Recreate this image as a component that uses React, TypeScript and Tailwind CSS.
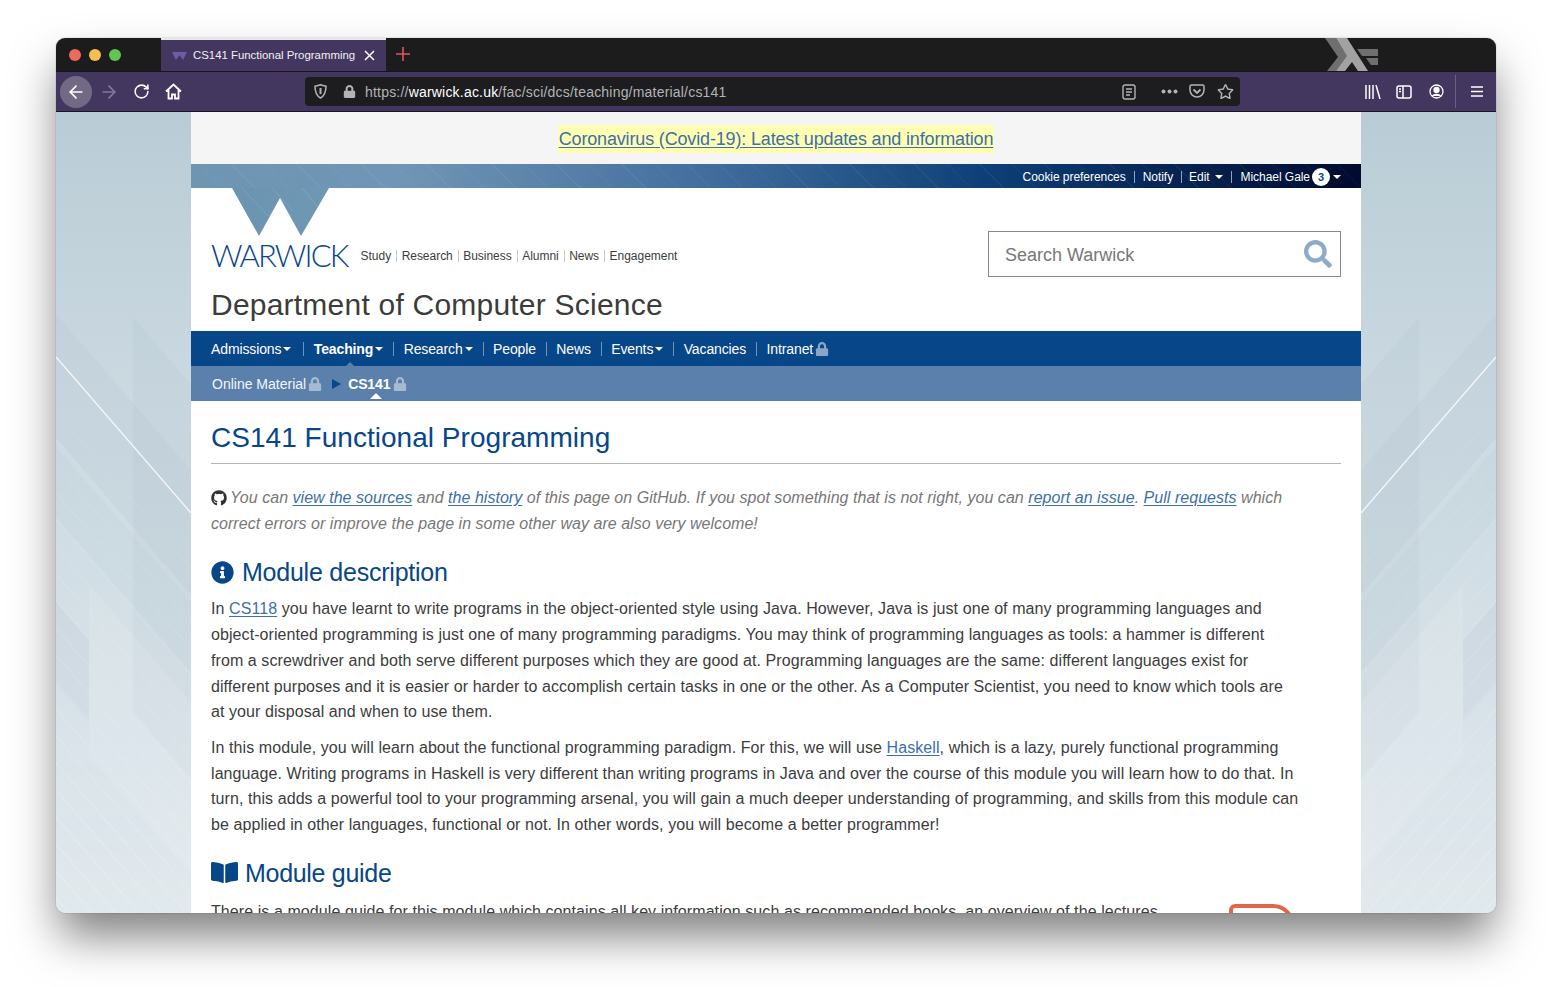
import { ArrowLeft, ArrowRight, RotateCw } from "lucide-react";
import type { ReactNode } from "react";
import {
  FaBookOpen,
  FaGithub,
  FaInfoCircle,
  FaLock,
  FaRegStar,
  FaSearch,
} from "react-icons/fa";

const navItems = [
  { label: "Admissions", caret: true },
  { label: "Teaching", caret: true, active: true },
  { label: "Research", caret: true },
  { label: "People" },
  { label: "News" },
  { label: "Events", caret: true },
  { label: "Vacancies" },
  { label: "Intranet", lock: true },
];

const topLinks = ["Study", "Research", "Business", "Alumni", "News", "Engagement"];

const stripes = Array.from({ length: 22 }, (_, i) => 300 + i * 27);

function Caret({ className = "" }: { className?: string }) {
  return (
    <span
      className={`inline-block h-0 w-0 border-x-4 border-t-4 border-x-transparent border-t-white ${className}`}
    />
  );
}

function TrafficLights() {
  return (
    <div className="flex w-[105px] items-center gap-2 pl-[13px]">
      <span className="h-3 w-3 rounded-full bg-[#ed6a5e]" />
      <span className="h-3 w-3 rounded-full bg-[#f5bf4f]" />
      <span className="h-3 w-3 rounded-full bg-[#61c554]" />
    </div>
  );
}

function HaskellLogo() {
  return (
    <svg className="absolute right-[117px] top-0" width="56" height="33" viewBox="0 0 56 33">
      <polygon points="2,0 13,0 25,19 13,33 4,33 15,19" fill="#6f6f6f" />
      <polygon points="13,0 24,0 45,33 35,33 29,24 22,33 13,33 24,18" fill="#a2a2a2" />
      <polygon points="34,11 55,11 55,18 39,18" fill="#6f6f6f" />
      <polygon points="43,20 55,20 55,27 48,27" fill="#6f6f6f" />
    </svg>
  );
}

function TabStrip() {
  return (
    <div className="relative flex h-[33px] shrink-0 bg-[#1c1c1c]">
      <TrafficLights />
      <div className="flex w-[225px] items-center border-t-2 border-t-[#e8e8e8] bg-[#44375f] pl-[11px] pr-[11px]">
        <svg width="15" height="8" viewBox="0 0 15 8">
          <polygon points="0,0 15,0 11,8 7.5,3 4,8" fill="#6f5aa5" />
        </svg>
        <span className="ml-[6px] flex-1 font-['Liberation_Sans',sans-serif] text-[11.4px] text-[#f2f0f5]">
          CS141 Functional Programming
        </span>
        <svg width="11" height="11" viewBox="0 0 11 11" stroke="#fff" strokeWidth="1.5">
          <path d="M1 1l9 9M10 1l-9 9" />
        </svg>
      </div>
      <svg className="ml-[10px] mt-[9px]" width="14" height="14" viewBox="0 0 14 14" stroke="#e2555c" strokeWidth="1.6">
        <path d="M7 0v14M0 7h14" />
      </svg>
      <HaskellLogo />
    </div>
  );
}

function UrlBar() {
  return (
    <div className="ml-[123px] flex h-[29px] w-[935px] items-center rounded-[4px] bg-[#1d1d1f] text-[#b4b4b4]">
      <svg className="ml-[9px]" width="13" height="15" viewBox="0 0 13 15" fill="none" stroke="#b4b4b4" strokeWidth="1.5">
        <path d="M1 2.2C3 1.8 5 1.3 6.5.8 8 1.3 10 1.8 12 2.2c0 6-1.5 9.5-5.5 11.8C2.5 11.700 1 8.200 1 2.200z" />
        <path d="M6.500 4v6" strokeWidth="2" />
      </svg>
      <FaLock className="ml-[16px] text-[13px]" />
      <span className="ml-[9px] pt-[2px] font-['Liberation_Sans',sans-serif] text-[14px] tracking-[0.2px]">
        https://<span className="text-white">warwick.ac.uk</span>/fac/sci/dcs/teaching/material/cs141
      </span>
      <div className="ml-auto flex items-center">
        <svg width="14" height="16" viewBox="0 0 14 16" fill="none" stroke="#b4b4b4" strokeWidth="1.400">
          <rect x="1" y="1" width="12" height="14" rx="2" />
          <path d="M4 5h6M4 8h6M4 11h4" />
        </svg>
        <svg className="ml-[25px]" width="17" height="5" viewBox="0 0 17 5" fill="#b4b4b4">
          <circle cx="2.500" cy="2.500" r="2" />
          <circle cx="8.500" cy="2.500" r="2" />
          <circle cx="14.500" cy="2.500" r="2" />
        </svg>
        <svg className="ml-[11px]" width="16" height="15" viewBox="0 0 16 15" fill="none" stroke="#b4b4b4" strokeWidth="1.500">
          <path d="M2.500 1h11A1.500 1.500 0 0 1 15 2.500V6a7 7 0 0 1-14 0V2.500A1.500 1.500 0 0 1 2.500 1z" />
          <path d="M4.500 5.500L8 9l3.500-3.500" strokeWidth="1.800" />
        </svg>
        <FaRegStar className="ml-[12px] mr-[6px] text-[17px]" />
      </div>
    </div>
  );
}

function Toolbar() {
  return (
    <div className="flex h-[41px] shrink-0 items-center border-y border-y-[#17151f] bg-[#44375f] text-white">
      <div className="ml-[4px] flex h-8 w-8 items-center justify-center rounded-full bg-[#726a85]">
        <ArrowLeft size={20} strokeWidth={2} />
      </div>
      <ArrowRight className="ml-[7px] text-[#837a95]" size={20} strokeWidth={2} />
      <RotateCw className="ml-[14px]" size={17} strokeWidth={2.2} />
      <svg className="ml-[15px]" width="17" height="17" viewBox="0 0 17 17" fill="none" stroke="#fff" strokeWidth="1.800">
        <path d="M1 8.500L8.500 1.500 16 8.500M3.500 7v8.500h3.500v-4h3v4h3.500V7" />
      </svg>
      <UrlBar />
      <svg className="ml-[125px]" width="16" height="14" viewBox="0 0 16 14" fill="none" stroke="#fff" strokeWidth="1.500">
        <path d="M1 0v14M4.500 0v14M8 0v14M11 0l4 14" />
      </svg>
      <svg className="ml-[15px]" width="16" height="14" viewBox="0 0 16 14" fill="none" stroke="#fff" strokeWidth="1.500">
        <rect x="1" y="1" width="14" height="12" rx="2" />
        <path d="M7 1v12M3 4h2M3 6.500h2" />
      </svg>
      <svg className="ml-[17px]" width="15" height="15" viewBox="0 0 15 15" fill="none" stroke="#fff" strokeWidth="1.300">
        <circle cx="7.500" cy="7.500" r="6.500" />
        <circle cx="7.500" cy="6" r="2.500" fill="#fff" />
        <path d="M3.500 12c1-2 7-2 8 0" fill="#fff" />
      </svg>
      <span className="ml-[11px] h-[33px] w-px bg-[#6a5f85]" />
      <svg className="ml-[15px]" width="12" height="11" viewBox="0 0 12 11" stroke="#fff" strokeWidth="1.700">
        <path d="M0 1h12M0 5.500h12M0 10h12" />
      </svg>
    </div>
  );
}

// one decorative side panel of the warwick background; the right one is the mirror
function SideArt({ flip = false }: { flip?: boolean }) {
  const id = flip ? "sideR" : "sideL";
  return (
    <svg className="shrink-0" width="135" height="801" viewBox="0 0 135 801">
      <defs>
        <linearGradient id={id} x1="0" y1="0" x2="0" y2="1">
          <stop offset="0" stopColor="#b9ccd5" />
          <stop offset="0.35" stopColor="#cbd9e1" />
          <stop offset="0.7" stopColor="#d6e1e7" />
          <stop offset="1" stopColor="#e1e9ee" />
        </linearGradient>
      </defs>
      <g transform={flip ? "translate(135 0) scale(-1 1)" : undefined}>
        <rect width="135" height="801" fill={`url(#${id})`} />
        <polygon points="0,202 135,358 135,484 0,326" fill="#6f8fa3" opacity="0.06" />
        <polygon points="77,205 135,272 135,667 77,600" fill="#6f8fa3" opacity="0.05" />
        <polygon points="0,335 135,490 135,560 0,405" fill="#6f8fa3" opacity="0.04" />
        <polygon points="33,474 135,592 135,762 33,644" fill="#ffffff" opacity="0.1" />
        <polygon points="0,490 33,528 33,610 0,572" fill="#6f8fa3" opacity="0.06" />
        <line x1="0" y1="245" x2="135" y2="401" stroke="#ffffff" strokeWidth="1.300" opacity="0.85" />
        {stripes.map((y, i) => (
          <line
            key={y}
            x1="0"
            y1={y}
            x2="135"
            y2={y + 156}
            stroke="#ffffff"
            strokeWidth="0.800"
            opacity={0.12 + i * 0.015}
          />
        ))}
      </g>
    </svg>
  );
}

function UtilityBar() {
  const links = ["Cookie preferences", "Notify"];
  return (
    <div className="flex h-6 shrink-0 items-center justify-end bg-[repeating-linear-gradient(45deg,transparent_0,transparent_22px,rgba(255,255,255,0.05)_22px,rgba(255,255,255,0.05)_23px),linear-gradient(90deg,#6e96b1_0%,#7095b6_18%,#44709f_43%,#0d3f77_68%,#000a2e_100%)] pt-px pr-5 text-[12px] tracking-[-0.05px] text-white">
      {links.map((link) => (
        <span key={link} className="border-r border-r-[#8fa5bd] pr-2 pl-2 leading-[12px]">
          {link}
        </span>
      ))}
      <span className="flex items-center border-r border-r-[#8fa5bd] pr-2 pl-[7px] leading-[12px]">
        Edit
        <Caret className="ml-[5px]" />
      </span>
      <span className="flex items-center pl-[9px] leading-[12px]">
        Michael Gale
        <span className="ml-[2px] flex h-[18px] w-[18px] items-center justify-center rounded-full bg-white text-[11px] font-bold text-[#074688]">
          3
        </span>
        <Caret className="ml-[3px]" />
      </span>
    </div>
  );
}

function Masthead() {
  return (
    <div className="flex h-[143px] shrink-0 justify-between bg-white px-5">
      <div>
        <svg className="ml-[21px] block" width="97" height="48" viewBox="0 0 97 48">
          <defs>
            <linearGradient id="wFill" x1="0" y1="0" x2="1" y2="0">
              <stop offset="0" stopColor="#6b94b0" />
              <stop offset="1" stopColor="#6f98b4" />
            </linearGradient>
          </defs>
          <polygon points="0,0 97,0 69,48 48,10 27,48" fill="url(#wFill)" />
          <path d="M10 0l32 34M40 0l22 24M70 0l15 18" stroke="#ffffff" strokeOpacity="0.12" />
        </svg>
        <div className="mt-[5px] flex items-center">
          <span className="font-['Lato',sans-serif] text-[31px] leading-[28px] font-light tracking-[-0.06em] text-[#074688]">
            WARWICK
          </span>
          <div className="ml-[13px] flex items-center pt-[2px] text-[12px] tracking-[-0.03px] text-[#3c3c3c]">
            {topLinks.map((link, i) => (
              <span
                key={link}
                className={`leading-[12px] ${i > 0 ? "ml-[5px] border-l border-l-[#c8c8c8] pl-[4.5px]" : ""}`}
              >
                {link}
              </span>
            ))}
          </div>
        </div>
        <div className="mt-[18px] text-[30px] leading-[36px] tracking-[0.22px] text-[#3c3c3c]">
          Department of Computer Science
        </div>
      </div>
      <div className="mt-[43px] flex h-[46px] w-[353px] items-center justify-between border border-[#8a8a8a] pr-2 pl-4 text-[18px] text-[#777777]">
        <span className="pt-[2px]">Search Warwick</span>
        <FaSearch className="text-[28px] text-[#8fa9c9]" />
      </div>
    </div>
  );
}

function MainNav() {
  return (
    <div className="flex h-[35px] shrink-0 items-center bg-[#074688] pl-5 text-[14px] tracking-[-0.12px] text-white">
      {navItems.map((item, i) => (
        <span
          key={item.label}
          className={`relative flex items-center leading-[14px] ${i === 1 ? "ml-3" : i > 1 ? "ml-[10px]" : ""} ${i > 0 ? "border-l border-l-[#6f94bd] pl-[9.4px]" : ""} ${item.active ? "font-bold" : ""}`}
        >
          {item.label}
          {item.caret ? <Caret className="ml-[2px]" /> : null}
          {item.lock ? <FaLock className="ml-[2px] text-[14px] text-[#8ba5c6]" /> : null}
          {item.active ? (
            <span className="absolute left-[40px] top-[20px] h-0 w-0 border-x-[6px] border-b-[6px] border-x-transparent border-b-[#5b80ab]" />
          ) : null}
        </span>
      ))}
    </div>
  );
}

function SubNav() {
  return (
    <div className="flex h-[35px] shrink-0 items-center bg-[#5b80ab] pl-[21px] text-[14px] text-white">
      <span className="pt-px text-[#f2f5f9]">Online Material</span>
      <FaLock className="ml-[2px] text-[14px] text-[#a6bad3]" />
      <span className="ml-[10px] h-0 w-0 border-y-[5px] border-l-[9px] border-y-transparent border-l-[#074688]" />
      <span className="relative ml-[7px] pt-px font-bold tracking-[-0.12px]">
        CS141
        <span className="absolute left-[22px] top-[20px] h-0 w-0 border-x-[6px] border-b-[6px] border-x-transparent border-b-white" />
      </span>
      <FaLock className="ml-[3px] text-[14px] text-[#a6bad3]" />
    </div>
  );
}

function A({ children }: { children: ReactNode }) {
  return <span className="text-[#3e6fa8] underline underline-offset-2">{children}</span>;
}

function Article() {
  return (
    <div className="flex-1 overflow-hidden bg-white px-5">
      <h1 className="mt-[19px] border-b border-b-[#b5b5b5] pb-[8px] text-[28px] leading-[35px] tracking-[0.03px] text-[#074688]">
        CS141 Functional Programming
      </h1>
      <p className="mt-[21px] w-[1090px] text-[16px] leading-[25.7px] tracking-[0.035px] text-[#777777] italic">
        <FaGithub className="mb-[2px] mr-[3px] inline text-[16px] text-[#333333]" />
        You can <A>view the sources</A> and <A>the history</A> of this page on GitHub. If you spot something that is
        not right, you can <A>report an issue</A>. <A>Pull requests</A> which correct errors or improve the page in
        some other way are also very welcome!
      </p>
      <h2 className="mt-5 flex items-center text-[25px] leading-[32px] tracking-[-0.23px] text-[#074688]">
        <FaInfoCircle className="mr-2 text-[23px]" />
        Module description
      </h2>
      <div className="mt-[8px] w-[1100px] text-[16px] leading-[25.7px] tracking-[0.08px] text-[#3c3c3c]">
        <p>
          In <A>CS118</A> you have learnt to write programs in the object-oriented style using Java. However, Java is
          just one of many programming languages and
          <br />
          object-oriented programming is just one of many programming paradigms. You may think of programming
          languages as tools: a hammer is different
          <br />
          from a screwdriver and both serve different purposes which they are good at. Programming languages are the
          same: different languages exist for
          <br />
          different purposes and it is easier or harder to accomplish certain tasks in one or the other. As a Computer
          Scientist, you need to know which tools are
          <br />
          at your disposal and when to use them.
        </p>
        <p className="mt-[10px]">
          In this module, you will learn about the functional programming paradigm. For this, we will use{" "}
          <A>Haskell</A>, which is a lazy, purely functional programming
          <br />
          language. Writing programs in Haskell is very different than writing programs in Java and over the course of
          this module you will learn how to do that. In
          <br />
          turn, this adds a powerful tool to your programming arsenal, you will gain a much deeper understanding of
          programming, and skills from this module can
          <br />
          be applied in other languages, functional or not. In other words, you will become a better programmer!
        </p>
      </div>
      <h2 className="mt-[19px] flex items-center text-[25px] leading-[32px] tracking-[-0.3px] text-[#074688]">
        <FaBookOpen className="mr-[7px] text-[27px]" />
        Module guide
      </h2>
      <div className="mt-[10px] flex text-[16px] leading-[25.7px] tracking-[0.08px] text-[#3c3c3c]">
        <p className="w-[1018px] shrink-0">
          There is a module guide for this module which contains all key information such as recommended books, an
          overview of the lectures,
        </p>
        <div className="mt-[5px] h-[60px] w-[66px] rounded-t-[6px] rounded-tr-[22px] border-4 border-[#e0654a]" />
      </div>
    </div>
  );
}

export default function App() {
  return (
    <div className="h-[987px] w-[1552px] overflow-hidden bg-white pt-[38px] pl-[56px] font-['Liberation_Sans',sans-serif]">
      <div className="flex h-[875px] w-[1440px] flex-col overflow-hidden rounded-[9px] shadow-[0_26px_46px_-3px_rgba(0,0,0,0.5),0_0_1px_rgba(0,0,0,0.6)]">
        <TabStrip />
        <Toolbar />
        <div className="flex min-h-0 flex-1">
          <SideArt />
          <div className="flex w-[1170px] flex-col overflow-hidden">
            <div className="flex h-[52px] shrink-0 items-center justify-center bg-[#f5f5f5]">
              <span className="mt-[2px] bg-[#ffffb3] px-px text-[18px] leading-[28px] tracking-[-0.16px] text-[#3e6fa8] underline underline-offset-2">
                Coronavirus (Covid-19): Latest updates and information
              </span>
            </div>
            <UtilityBar />
            <Masthead />
            <MainNav />
            <SubNav />
            <Article />
          </div>
          <SideArt flip />
        </div>
      </div>
    </div>
  );
}
